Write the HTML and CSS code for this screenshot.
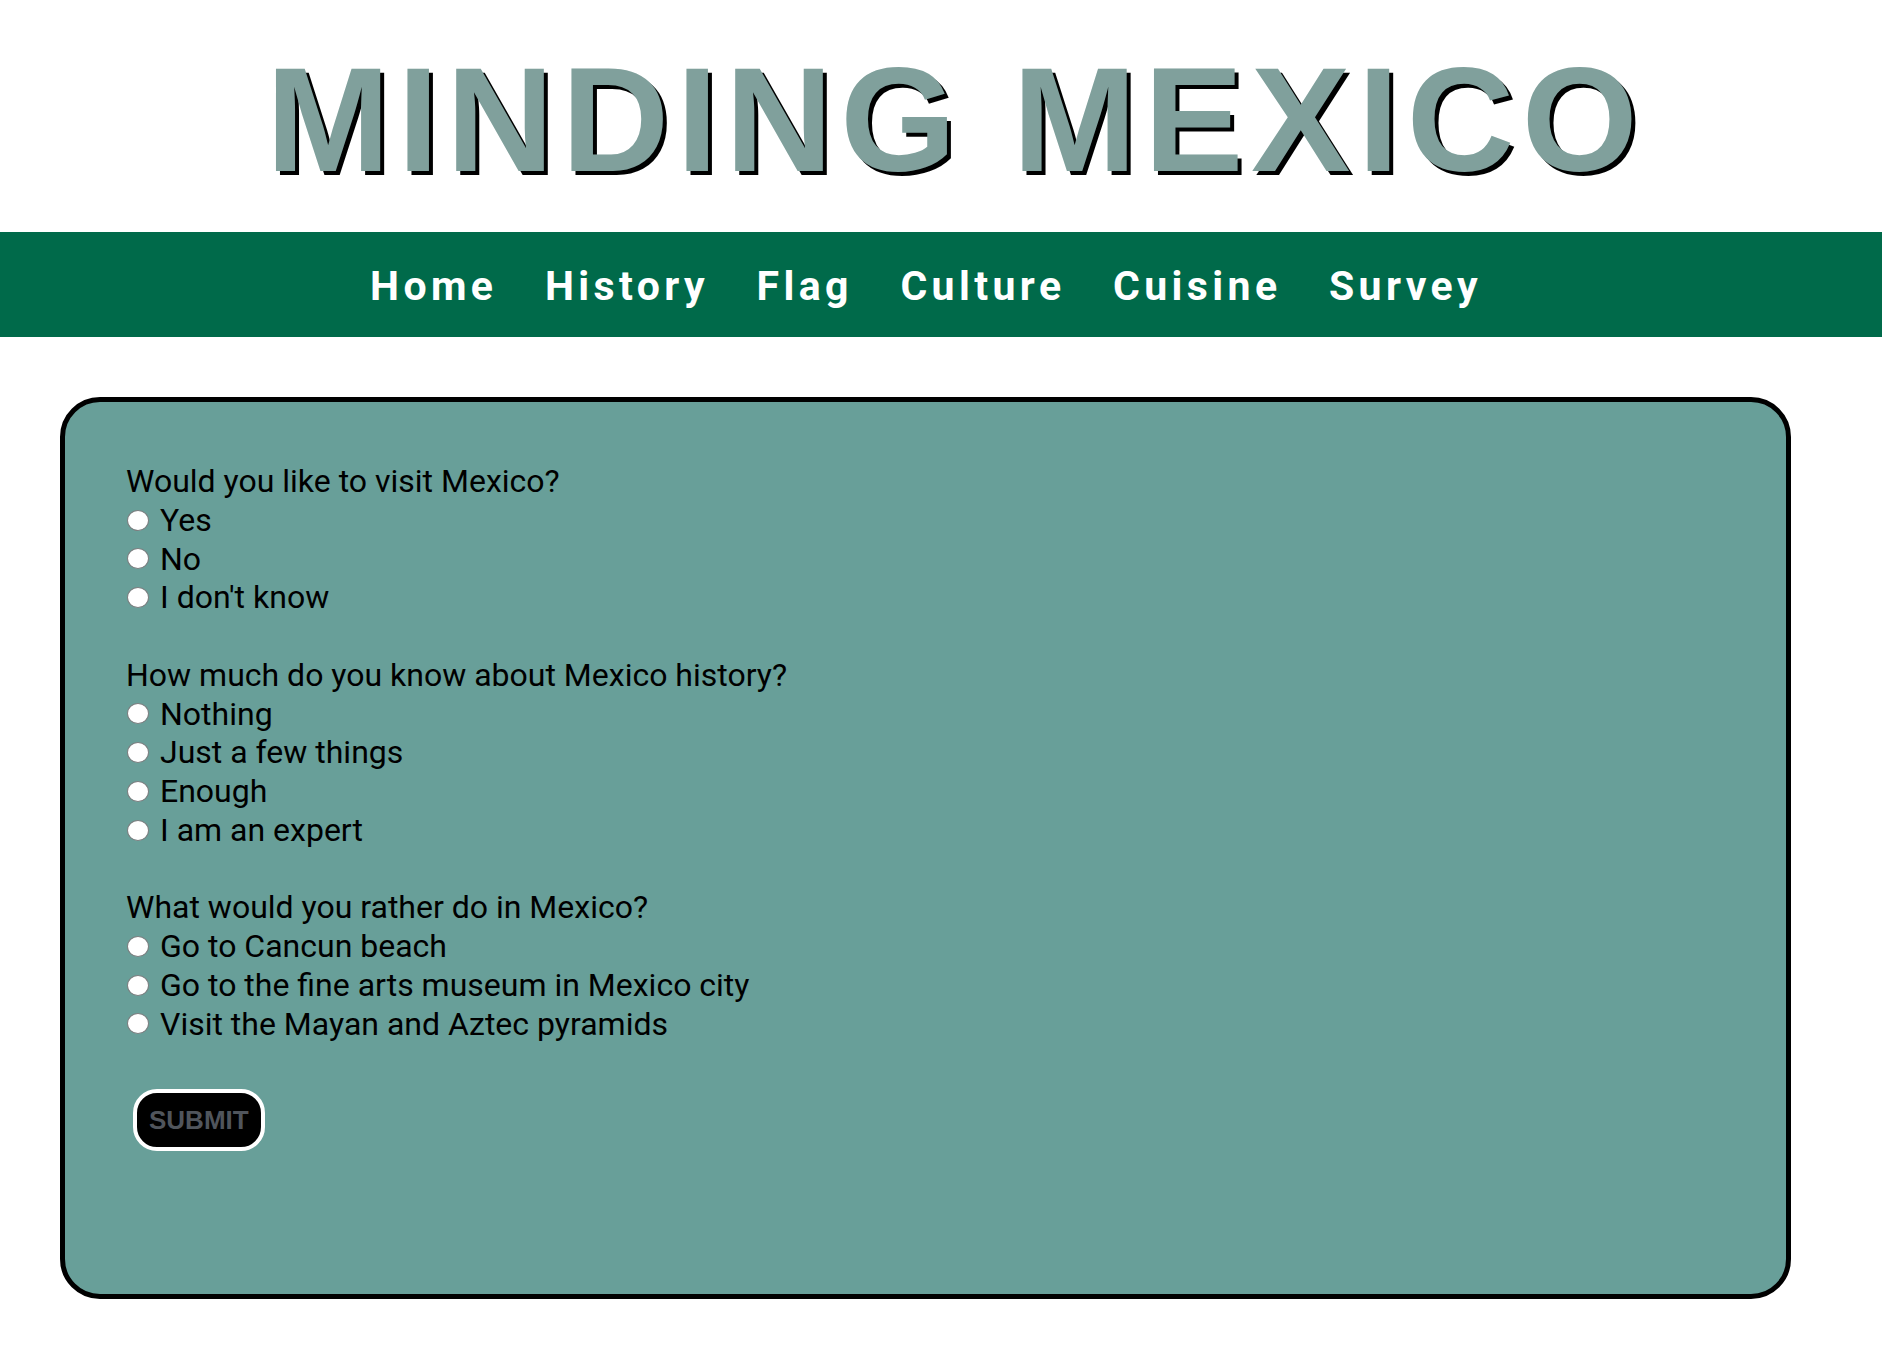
FILE: index.html
```html
<!DOCTYPE html>
<html lang="en">
<head>
<meta charset="utf-8">
<title>Minding Mexico - Survey</title>
<link rel="stylesheet" href="styles.css">
</head>
<body>
<header class="site-header">
  <h1 class="site-title">MINDING MEXICO</h1>
</header>
<nav class="main-nav">
  <a class="nav-link" href="#">Home</a>
  <a class="nav-link" href="#">History</a>
  <a class="nav-link" href="#">Flag</a>
  <a class="nav-link" href="#">Culture</a>
  <a class="nav-link" href="#">Cuisine</a>
  <a class="nav-link" href="#">Survey</a>
</nav>
<form class="survey">
  <div class="question">
    <div class="q-text">Would you like to visit Mexico?</div>
    <label class="option"><input type="radio" name="visit"> <span>Yes</span></label>
    <label class="option"><input type="radio" name="visit"> <span>No</span></label>
    <label class="option"><input type="radio" name="visit"> <span>I don't know</span></label>
  </div>
  <div class="question">
    <div class="q-text">How much do you know about Mexico history?</div>
    <label class="option"><input type="radio" name="history"> <span>Nothing</span></label>
    <label class="option"><input type="radio" name="history"> <span>Just a few things</span></label>
    <label class="option"><input type="radio" name="history"> <span>Enough</span></label>
    <label class="option"><input type="radio" name="history"> <span>I am an expert</span></label>
  </div>
  <div class="question">
    <div class="q-text">What would you rather do in Mexico?</div>
    <label class="option"><input type="radio" name="rather"> <span>Go to Cancun beach</span></label>
    <label class="option"><input type="radio" name="rather"> <span>Go to the fine arts museum in Mexico city</span></label>
    <label class="option"><input type="radio" name="rather"> <span>Visit the Mayan and Aztec pyramids</span></label>
  </div>
  <button class="submit" type="button">SUBMIT</button>
</form>
</body>
</html>
```

FILE: styles.css
```css
html, body {
  margin: 0;
  padding: 0;
  background: #ffffff;
}

body {
  font-family: Roboto, "Liberation Sans", sans-serif;
}

.site-header {
  padding: 34px 0 27px 29px;
  text-align: center;
}

.site-title {
  margin: 0;
  font-family: "Liberation Sans", Arial, sans-serif;
  font-weight: bold;
  font-size: 149px;
  line-height: 171px;
  letter-spacing: 7.45px;
  color: #80a09c;
  text-shadow: 4px 4px 0 #000000;
}

.main-nav {
  display: flex;
  justify-content: center;
  gap: 47.5px;
  background: #006a4a;
  height: 105px;
  box-sizing: border-box;
  padding: 30px 30px 27px 0;
}

.nav-link {
  color: #ffffff;
  text-decoration: none;
  font-family: Roboto, sans-serif;
  font-weight: bold;
  font-size: 41px;
  line-height: 48px;
  letter-spacing: 4.4px;
}

.survey {
  margin: 60px 91px 60px 60px;
  background: #689f99;
  border: 5px solid #000000;
  border-radius: 40px;
  padding: 60px 60px 143px 61px;
  font-size: 32px;
  line-height: 38.75px;
  color: #000000;
}

.question {
  margin-bottom: 38.75px;
}

.question:last-of-type {
  margin-bottom: 0;
}

.q-text {
  display: block;
}

.option {
  display: flex;
  align-items: center;
  gap: 11px;
}

.option input {
  appearance: none;
  -webkit-appearance: none;
  box-sizing: border-box;
  width: 22px;
  height: 21px;
  margin: 0 0 0 1px;
  border: 1.5px solid #7b7f80;
  border-radius: 50%;
  background: #ffffff;
}

.submit {
  display: block;
  margin: 46px 0 0 7px;
  padding: 12px 12px;
  background: #000000;
  color: #50555c;
  border: 4px solid #ffffff;
  border-radius: 24px;
  font-family: "Liberation Sans", Arial, sans-serif;
  font-weight: bold;
  font-size: 26px;
  line-height: 30px;
}
```
